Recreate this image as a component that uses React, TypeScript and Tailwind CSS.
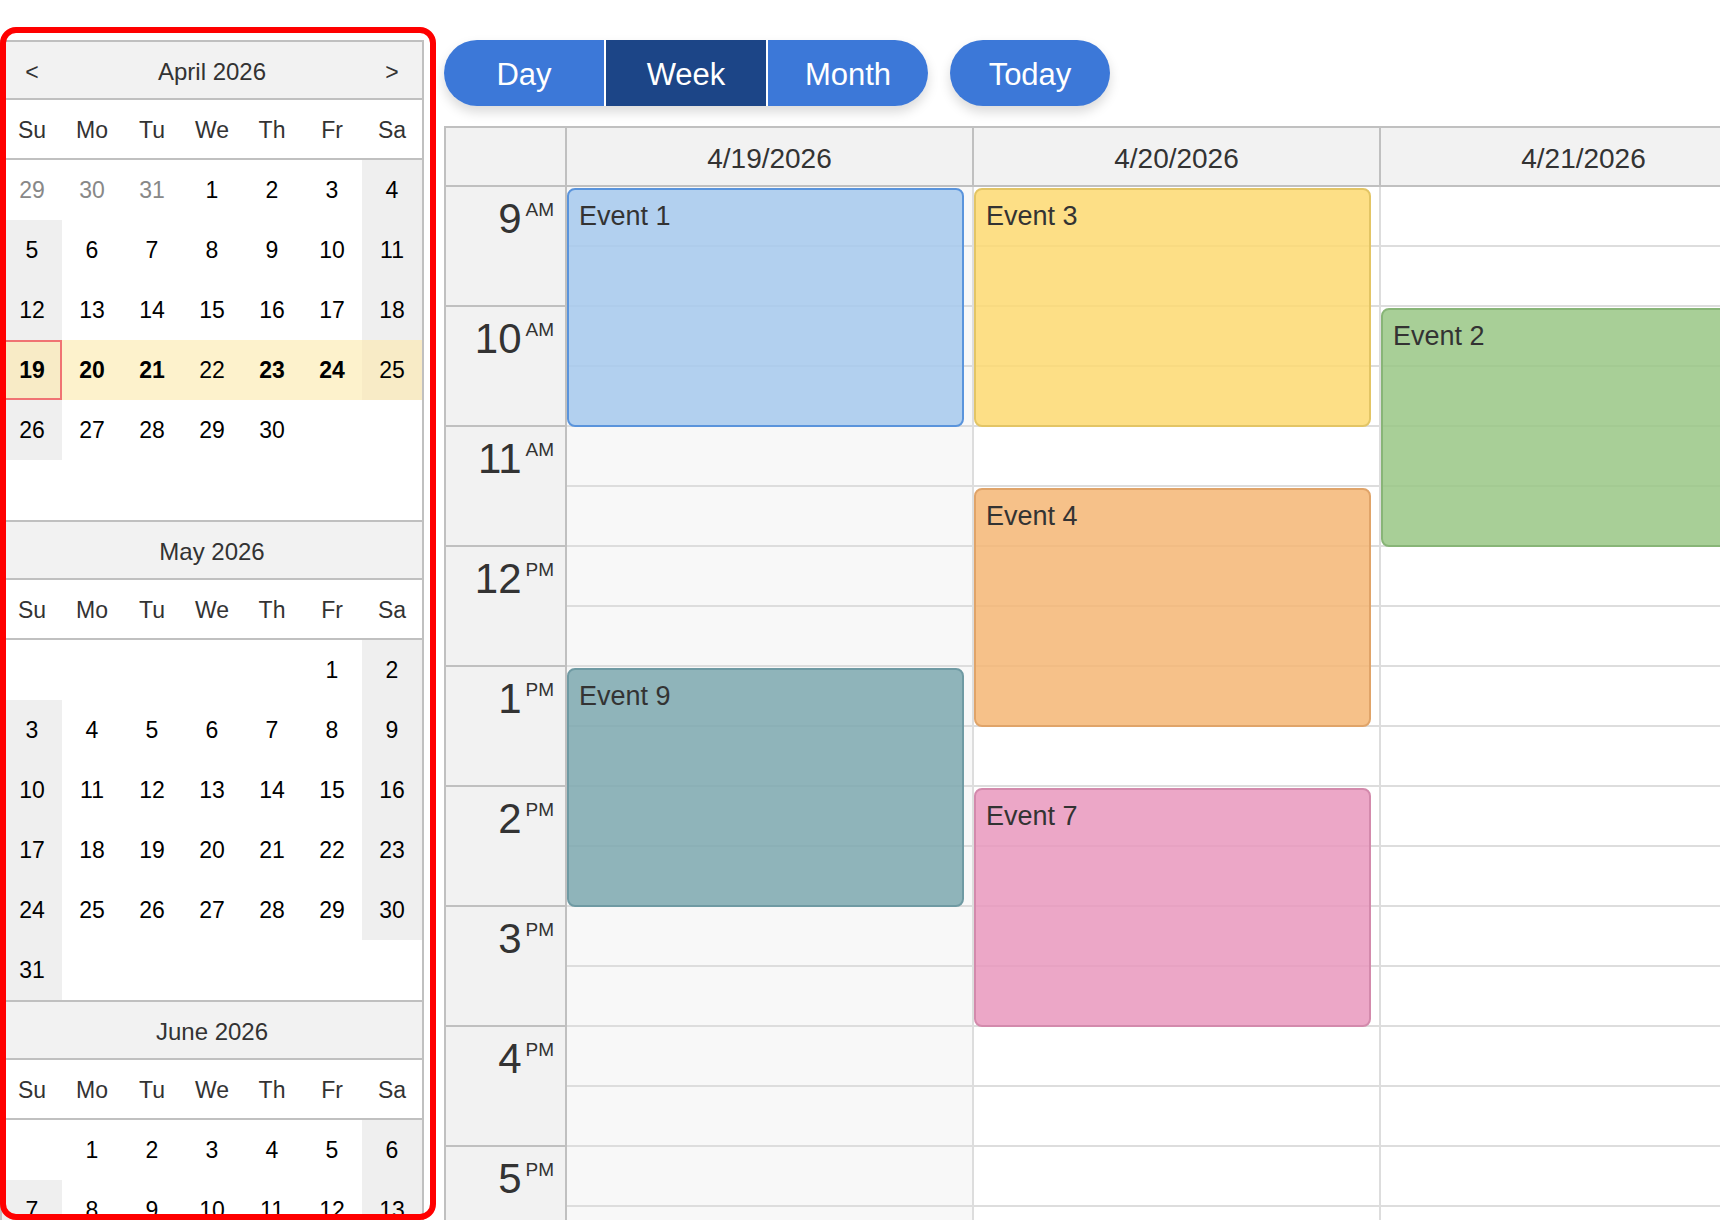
import React from 'react'

type Cell = { d?: number; other?: boolean }

const weekDays = ['Su', 'Mo', 'Tu', 'We', 'Th', 'Fr', 'Sa']

// mini calendar months, always 6 rows of 7
const months: { title: string; nav?: boolean; cells: Cell[] }[] = [
  {
    title: 'April 2026',
    nav: true,
    cells: [
      { d: 29, other: true }, { d: 30, other: true }, { d: 31, other: true },
      ...Array.from({ length: 30 }, (_, i) => ({ d: i + 1 })),
    ],
  },
  {
    title: 'May 2026',
    cells: [...Array.from({ length: 5 }, () => ({})), ...Array.from({ length: 31 }, (_, i) => ({ d: i + 1 }))],
  },
  {
    title: 'June 2026',
    cells: [{}, ...Array.from({ length: 30 }, (_, i) => ({ d: i + 1 }))],
  },
]

const boldDays = [19, 20, 21, 23, 24]

const hours = [
  { n: '9', p: 'AM' },
  { n: '10', p: 'AM' },
  { n: '11', p: 'AM' },
  { n: '12', p: 'PM' },
  { n: '1', p: 'PM' },
  { n: '2', p: 'PM' },
  { n: '3', p: 'PM' },
  { n: '4', p: 'PM' },
  { n: '5', p: 'PM' },
]

const days = ['4/19/2026', '4/20/2026', '4/21/2026', '4/22/2026', '4/23/2026', '4/24/2026', '4/25/2026']

const events = [
  { day: 0, start: 9, end: 11, title: 'Event 1', cls: 'bg-[rgba(166,201,237,0.85)] border-[#5a94dc]' },
  { day: 0, start: 13, end: 15, title: 'Event 9', cls: 'bg-[rgba(124,168,175,0.85)] border-[#6f9aa3]' },
  { day: 1, start: 9, end: 11, title: 'Event 3', cls: 'bg-[rgba(253,217,113,0.85)] border-[#e3c565]' },
  { day: 1, start: 11.5, end: 13.5, title: 'Event 4', cls: 'bg-[rgba(244,182,116,0.85)] border-[#e0a469]' },
  { day: 1, start: 14, end: 16, title: 'Event 7', cls: 'bg-[rgba(233,152,189,0.85)] border-[#d38aac]' },
  { day: 2, start: 10, end: 12, title: 'Event 2', cls: 'bg-[rgba(153,199,133,0.85)] border-[#88b577]' },
  { day: 4, start: 10, end: 12, title: 'Event 5', cls: 'bg-[rgba(166,201,237,0.85)] border-[#5a94dc]' },
  { day: 5, start: 13, end: 14, title: 'Event 6', cls: 'bg-[rgba(253,217,113,0.85)] border-[#e3c565]' },
]

function MonthBlock({ m, mi }: { m: (typeof months)[number]; mi: number }) {
  const cells = [...m.cells]
  while (cells.length < 42) cells.push({})

  return (
    <div className="border-t-2 border-[#c0c0c0]">
      <div className="grid h-[58px] grid-cols-7 items-center border-b-2 border-[#c0c0c0] bg-[#f2f2f2] pt-[4px] text-[#333]">
        <div className="text-center">{m.nav ? '<' : ''}</div>
        <div className="col-span-5 text-center text-[24px]">{m.title}</div>
        <div className="text-center">{m.nav ? '>' : ''}</div>
      </div>
      <div className="grid h-[60px] grid-cols-7 items-center border-b-2 border-[#c0c0c0] pt-[2px] text-[#333]">
        {weekDays.map((w) => (
          <div key={w} className="text-center">{w}</div>
        ))}
      </div>
      <div className="grid grid-cols-7">
        {cells.map((c, i) => {
          const col = i % 7
          const weekend = col === 0 || col === 6
          const selected = mi === 0 && !c.other && c.d !== undefined && c.d >= 19 && c.d <= 25
          let bg = 'bg-white'
          if (selected) bg = weekend ? 'bg-[#f8ebc6]' : 'bg-[#fdf2cc]'
          else if (c.d !== undefined && !c.other && weekend) bg = 'bg-[#efefef]'
          const today = selected && c.d === 19
          const bold = selected && boldDays.includes(c.d!)
          return (
            <div
              key={i}
              className={`flex h-[60px] items-center justify-center ${bg} ${today ? 'border-2 border-[#f07373]' : ''} ${
                c.other ? 'text-[#888]' : 'text-black'
              } ${bold ? 'font-bold' : ''}`}
            >
              {c.d ?? ''}
            </div>
          )
        })}
      </div>
    </div>
  )
}

export default function App() {
  return (
    <div className="relative h-[1220px] w-[1720px] overflow-hidden bg-white font-['Liberation_Sans',Arial,sans-serif] text-[#333]">
      <div className="flex items-start">
        {/* mini calendar sidebar */}
        <aside className="mt-[40px] w-[424px] shrink-0 border-x-2 border-[#c0c0c0] text-[23px]">
          {months.map((m, i) => (
            <MonthBlock key={m.title} m={m} mi={i} />
          ))}
        </aside>

        <main className="ml-[20px] mt-[40px] shrink-0">
          {/* view switcher */}
          <div className="flex items-center text-[31px] text-white">
            <div className="flex gap-[2px] overflow-hidden rounded-full shadow-[0_6px_12px_rgba(0,0,0,0.15)]">
              <button className="h-[66px] w-[160px] bg-[#3c78d8] pt-[4px]">Day</button>
              <button className="h-[66px] w-[160px] bg-[#1c4587] pt-[4px]">Week</button>
              <button className="h-[66px] w-[160px] bg-[#3c78d8] pt-[4px]">Month</button>
            </div>
            <button className="ml-[22px] h-[66px] w-[160px] rounded-full bg-[#3c78d8] pt-[4px] shadow-[0_6px_12px_rgba(0,0,0,0.15)]">
              Today
            </button>
          </div>

          {/* week grid */}
          <div className="mt-[20px] flex border-l-2 border-t-2 border-[#c0c0c0]">
            <div className="w-[121px] shrink-0 border-r-2 border-[#c0c0c0] bg-[#f2f2f2]">
              <div className="h-[59px] border-b-2 border-[#c0c0c0]" />
              {hours.map((h) => (
                <div key={h.n + h.p} className="flex h-[120px] items-start justify-end border-b-2 border-[#c0c0c0] pr-[11px] pt-[11px]">
                  <span className="text-[42px] leading-none">{h.n}</span>
                  <span className="ml-[4px] mt-[2px] text-[19px] leading-none">{h.p}</span>
                </div>
              ))}
            </div>

            {days.map((d, di) => (
              <div key={d} className="w-[407px] shrink-0">
                <div className="flex h-[59px] items-center justify-center border-b-2 border-r-2 border-[#c0c0c0] bg-[#f2f2f2] pt-[4px] text-[28px]">
                  {d}
                </div>
                <div className={`relative border-r-2 border-[#ddd] ${di === 0 || di === 6 ? 'bg-[#f8f8f8]' : 'bg-white'}`}>
                  {Array.from({ length: hours.length * 2 }, (_, i) => (
                    <div key={i} className="h-[60px] border-b-2 border-[#ddd]" />
                  ))}
                  {events
                    .filter((e) => e.day === di)
                    .map((e) => (
                      <div
                        key={e.title}
                        className={`absolute left-0 right-[8px] rounded-[8px] border-2 pl-[10px] pt-[6px] text-[27px] text-[#333] ${e.cls}`}
                        style={{ top: (e.start - 9) * 120 + 1, height: (e.end - e.start) * 120 - 1 }}
                      >
                        {e.title}
                      </div>
                    ))}
                </div>
              </div>
            ))}
          </div>
        </main>
      </div>

      {/* highlight frame */}
      <div className="pointer-events-none absolute left-0 top-[27px] h-[1193px] w-[436px] rounded-[16px] border-[6px] border-[#ff0000]" />
    </div>
  )
}
